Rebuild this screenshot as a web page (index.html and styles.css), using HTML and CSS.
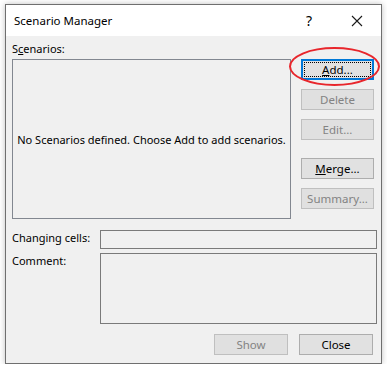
FILE: index.html
```html
<!DOCTYPE html>
<html lang="en">
<head>
    <meta charset="UTF-8">
    <meta name="viewport" content="width=device-width, initial-scale=1.0">
    <title>Scenario Manager</title>
    <link rel="stylesheet" href="styles.css">
</head>
<body>
    <div class="dialog">
        <div class="titlebar">
            <span class="title">Scenario Manager</span>
            <span class="help">?</span>
            <span class="close-x">
                <svg width="12" height="12" viewBox="0 0 12 12">
                    <path d="M1 1 L11 11 M11 1 L1 11" stroke="#1a1a1a" stroke-width="1.1" fill="none"/>
                </svg>
            </span>
        </div>
        <div class="content">
            <div class="list-label">S<u>c</u>enarios:</div>
            <div class="main">
                <div class="listbox">No Scenarios defined. Choose Add to add scenarios.</div>
                <div class="side-buttons">
                    <div class="add-wrap">
                        <button class="btn btn-focus"><span class="focus-rect"><u>A</u>dd...</span></button>
                        <div class="highlight"></div>
                    </div>
                    <button class="btn" disabled>Delete</button>
                    <button class="btn" disabled>Edit...</button>
                    <button class="btn btn-gap"><u>M</u>erge...</button>
                    <button class="btn" disabled>Summary...</button>
                </div>
            </div>
            <div class="field-row">
                <label>Changing cells:</label>
                <div class="textbox"></div>
            </div>
            <div class="field-row">
                <label>Comment:</label>
                <div class="textbox textbox-tall"></div>
            </div>
            <div class="footer">
                <button class="btn" disabled>Show</button>
                <button class="btn">Close</button>
            </div>
        </div>
    </div>
</body>
</html>
```

FILE: styles.css
```css
body {
    margin: 0;
    background-color: #ffffff;
    font-family: "Noto Sans", "Open Sans", sans-serif;
    font-size: 11px;
    color: #000;
}
.dialog {
    margin: 4px 0 0 5px;
    width: 375px;
    height: 358px;
    border: 1px solid #6f6f6f;
    background-color: #f0f0f0;
    box-shadow: 0 0 6px rgba(0, 0, 0, 0.25);
}
.titlebar {
    height: 31px;
    background-color: #ffffff;
    display: flex;
    align-items: center;
    font-size: 11.5px;
}
.title {
    padding-left: 8px;
    flex: 1;
}
.help {
    width: 12px;
    margin-right: 33px;
    font-size: 14px;
}
.close-x {
    display: flex;
    margin-right: 18px;
}
.content {
    padding: 5px 4px 0 6px;
}
.list-label {
    height: 18px;
    line-height: 16px;
}
.main {
    display: flex;
}
.listbox {
    width: 277px;
    height: 158px;
    border: 1px solid #828790;
    display: flex;
    align-items: center;
    justify-content: center;
    white-space: nowrap;
}
.side-buttons {
    display: flex;
    flex-direction: column;
    margin-left: 10px;
    gap: 9px;
}
.btn {
    width: 73px;
    height: 21px;
    padding: 0;
    border: 1px solid #adadad;
    background-color: #e1e1e1;
    font-family: inherit;
    font-size: 11.5px;
    color: #000;
}
.btn:disabled {
    border-color: #bfbfbf;
    background-color: #e0e0e0;
    color: #838383;
}
.btn-gap {
    margin-top: 9px;
}
.btn-focus {
    border: 2px solid #0078d7;
    display: flex;
    align-items: stretch;
    padding: 1px;
}
.focus-rect {
    flex: 1;
    border: 1px dotted #000;
    display: flex;
    align-items: center;
    justify-content: center;
}
.add-wrap {
    position: relative;
}
.highlight {
    position: absolute;
    left: -12px;
    top: -12px;
    width: 87px;
    height: 35px;
    border: 2px solid #e8262c;
    border-radius: 50%;
}
.field-row {
    display: flex;
    margin-top: 11px;
}
.field-row + .field-row {
    margin-top: 4px;
}
.field-row label {
    width: 88px;
    line-height: 16px;
}
.textbox {
    width: 276px;
    height: 17px;
    border: 1px solid #7a7a7a;
}
.textbox-tall {
    height: 69px;
}
.footer {
    display: flex;
    justify-content: flex-end;
    gap: 11px;
    margin-top: 10px;
    padding-right: 4px;
}
.footer .btn {
    width: 74px;
}
```
